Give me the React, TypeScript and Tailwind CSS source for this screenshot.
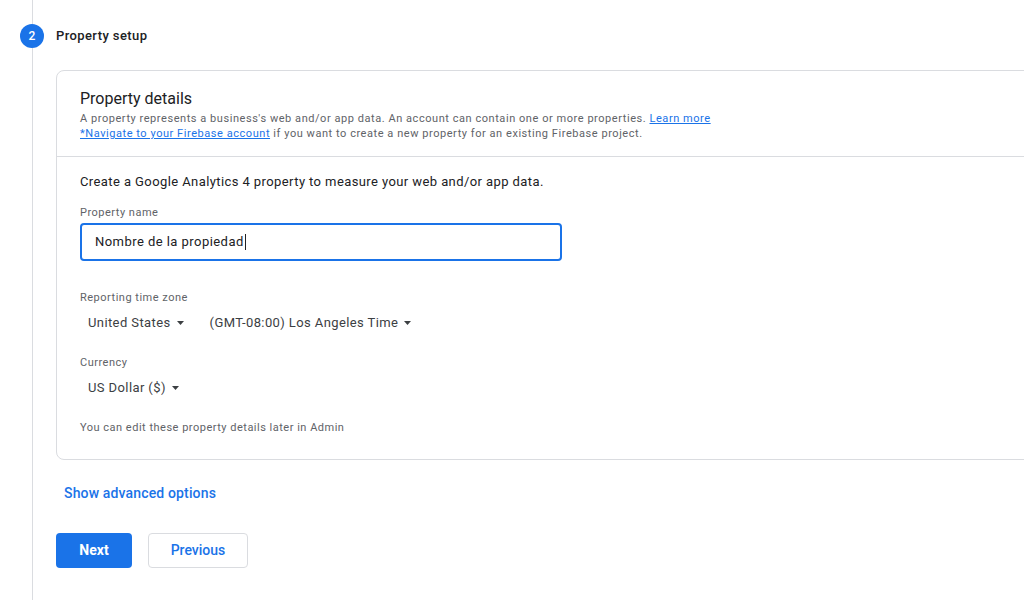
import React from 'react';

const Caret = () => (
  <svg width="7" height="4" viewBox="0 0 7 4" className="shrink-0">
    <path d="M0 0 L7 0 L3.5 4 Z" fill="#3c4043" />
  </svg>
);

const Select = ({ label }: { label: string }) => (
  <button className="flex h-[20px] items-center gap-[6px] px-2 text-[13px] tracking-[0.4px] text-[#3c4043]">
    <span>{label}</span>
    <Caret />
  </button>
);

const Label = ({ children }: { children: React.ReactNode }) => (
  <div className="text-[11px] leading-[16px] tracking-[0.5px] text-[#5f6368]">{children}</div>
);

export default function App() {
  return (
    <div className="flex h-[600px] w-[1024px] overflow-hidden bg-white font-['Roboto','Liberation_Sans',sans-serif] text-[#202124]">
      {/* step rail */}
      <div className="w-[56px] shrink-0 pl-[20px]">
        <div className="flex h-full w-[24px] flex-col items-center">
          <div className="h-[24px] w-px bg-[#dadce0]" />
          <div className="flex h-[24px] w-[24px] shrink-0 items-center justify-center rounded-full bg-[#1a73e8] text-[12px] font-medium text-white">
            2
          </div>
          <div className="w-px flex-1 bg-[#dadce0]" />
        </div>
      </div>

      {/* content */}
      <div className="min-w-0 flex-1">
        <div className="mt-[24px] flex h-[24px] items-center text-[13px] font-medium tracking-[0.4px] text-[#202124]">
          Property setup
        </div>

        <div className="mr-[-24px] mt-[22px] rounded-lg border border-[#dadce0]">
          <div className="border-b border-[#dadce0] pb-[15px] pl-[23px] pt-[18px]">
            <h2 className="text-[16px] leading-[20px] text-[#202124]">Property details</h2>
            <p className="mt-[2px] text-[11px] leading-[15px] tracking-[0.55px] text-[#5f6368]">
              A property represents a business's web and/or app data. An account can contain one or more properties.{' '}
              <a className="text-[#1a73e8] underline">Learn more</a>
            </p>
            <p className="text-[11px] leading-[15px] tracking-[0.55px] text-[#5f6368]">
              <a className="text-[#1a73e8] underline">*Navigate to your Firebase account</a> if you want to create a new
              property for an existing Firebase project.
            </p>
          </div>

          <div className="pb-[23px] pl-[23px] pt-[15px]">
            <p className="text-[13px] leading-[20px] tracking-[0.41px] text-[#202124]">
              Create a Google Analytics 4 property to measure your web and/or app data.
            </p>

            <div className="mt-[13px]">
              <Label>Property name</Label>
            </div>
            <div className="mt-[2px] flex h-[38px] w-[482px] items-center rounded border-2 border-[#1a73e8] pl-[13px] text-[13px] tracking-[0.45px] text-[#202124]">
              Nombre de la propiedad
              <span className="ml-px h-[16px] w-px bg-[#202124]" />
            </div>

            <div className="mt-[29px]">
              <Label>Reporting time zone</Label>
            </div>
            <div className="mt-[7px] flex gap-[10px]">
              <Select label="United States" />
              <Select label="(GMT-08:00) Los Angeles Time" />
            </div>

            <div className="mt-[22px]">
              <Label>Currency</Label>
            </div>
            <div className="mt-[7px] flex">
              <Select label="US Dollar ($)" />
            </div>

            <div className="mt-[22px]">
              <Label>You can edit these property details later in Admin</Label>
            </div>
          </div>
        </div>

        <div className="mt-[23px] pl-2 text-[14px] font-medium leading-[20px] tracking-[0.15px] text-[#1a73e8]">
          Show advanced options
        </div>

        <div className="mt-[30px] flex gap-[16px]">
          <button className="h-[35px] w-[76px] rounded bg-[#1a73e8] text-[14px] font-bold text-white">Next</button>
          <button className="h-[35px] w-[100px] rounded border border-[#dadce0] text-[14px] font-medium text-[#1a73e8]">
            Previous
          </button>
        </div>
      </div>
    </div>
  );
}
